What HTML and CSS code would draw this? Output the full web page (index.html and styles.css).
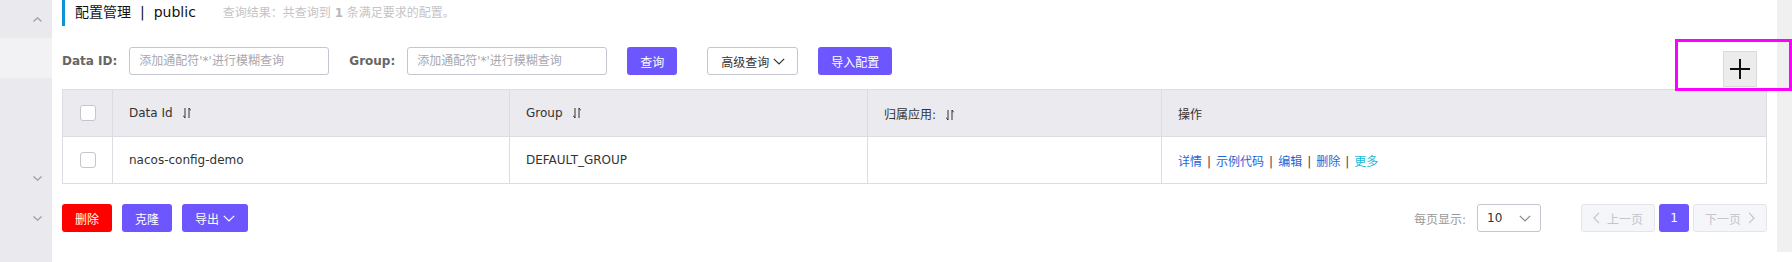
FILE: index.html
```html
<!DOCTYPE html>
<html lang="zh-CN">
<head>
  <meta charset="UTF-8" />
  <meta name="viewport" content="width=device-width, initial-scale=1.0"/>
  <title>配置管理 - Nacos</title>
  <link rel="stylesheet" href="styles.css">
</head>
<body>
  <div class="page">
    <aside class="sidebar">
      <div class="menu-item first">
        <svg class="arrow" width="9" height="5" viewBox="0 0 9 5"><path d="M0.5 4.5 L4.5 0.8 L8.5 4.5" /></svg>
      </div>
      <div class="menu-item active"></div>
      <div class="menu-item"></div>
      <div class="menu-item"></div>
      <div class="menu-item">
        <svg class="arrow" width="9" height="5" viewBox="0 0 9 5"><path d="M0.5 0.5 L4.5 4.2 L8.5 0.5" /></svg>
      </div>
      <div class="menu-item">
        <svg class="arrow" width="9" height="5" viewBox="0 0 9 5"><path d="M0.5 0.5 L4.5 4.2 L8.5 0.5" /></svg>
      </div>
    </aside>

    <main class="content">
      <div class="page-title">
        <span class="title-main">配置管理<span class="sep">|</span>public</span>
        <span class="query-result">查询结果：共查询到 <b>1</b> 条满足要求的配置。</span>
      </div>

      <div class="search-bar">
        <label class="field-label">Data ID:</label>
        <input class="field-input" type="text" placeholder="添加通配符'*'进行模糊查询">
        <label class="field-label">Group:</label>
        <input class="field-input" type="text" placeholder="添加通配符'*'进行模糊查询">
        <button class="btn btn-primary">查询</button>
        <button class="btn btn-normal btn-wide">高级查询
          <svg class="down" width="12" height="7" viewBox="0 0 12 7"><path d="M0.8 0.8 L6 6 L11.2 0.8" /></svg>
        </button>
        <button class="btn btn-primary">导入配置</button>
        <button class="btn-add" title="新建配置">
          <svg width="22" height="22" viewBox="0 0 22 22"><path d="M1 11 H21 M11 1 V21" /></svg>
        </button>
      </div>

      <table class="config-table">
        <thead>
          <tr>
            <th class="col-check"><span class="checkbox"></span></th>
            <th class="col-id">Data Id<svg class="sort" width="8" height="12" viewBox="0 0 8 12"><path d="M2 1 V11 L0.2 8.6 M6 11 V1 L7.8 3.4" /></svg></th>
            <th class="col-group">Group<svg class="sort" width="8" height="12" viewBox="0 0 8 12"><path d="M2 1 V11 L0.2 8.6 M6 11 V1 L7.8 3.4" /></svg></th>
            <th class="col-app">归属应用:<svg class="sort" width="8" height="12" viewBox="0 0 8 12"><path d="M2 1 V11 L0.2 8.6 M6 11 V1 L7.8 3.4" /></svg></th>
            <th>操作</th>
          </tr>
        </thead>
        <tbody>
          <tr>
            <td class="col-check"><span class="checkbox"></span></td>
            <td>nacos-config-demo</td>
            <td>DEFAULT_GROUP</td>
            <td></td>
            <td class="actions">
              <a href="#">详情</a><span class="bar">|</span><a href="#">示例代码</a><span class="bar">|</span><a href="#">编辑</a><span class="bar">|</span><a href="#">删除</a><span class="bar">|</span><a href="#" class="more">更多</a>
            </td>
          </tr>
        </tbody>
      </table>

      <div class="footer-bar">
        <div class="batch">
          <button class="btn btn-danger">删除</button>
          <button class="btn btn-primary">克隆</button>
          <button class="btn btn-primary">导出
            <svg class="down" width="12" height="7" viewBox="0 0 12 7"><path d="M0.8 0.8 L6 6 L11.2 0.8" /></svg>
          </button>
        </div>
        <div class="pagination">
          <span class="page-size-label">每页显示:</span>
          <div class="page-size">
            <span>10</span>
            <svg class="down" width="12" height="7" viewBox="0 0 12 7"><path d="M0.8 0.8 L6 6 L11.2 0.8" /></svg>
          </div>
          <button class="page-btn page-nav prev">
            <svg width="7" height="12" viewBox="0 0 7 12"><path d="M6 0.8 L1 6 L6 11.2" /></svg>上一页
          </button>
          <button class="page-btn current">1</button>
          <button class="page-btn page-nav next">下一页
            <svg width="7" height="12" viewBox="0 0 7 12"><path d="M1 0.8 L6 6 L1 11.2" /></svg>
          </button>
        </div>
      </div>
    </main>

    <div class="scrollbar"></div>
    <div class="highlight"></div>
  </div>
</body>
</html>
```

FILE: styles.css
```css
* {
  margin: 0;
  padding: 0;
  box-sizing: border-box;
}
body {
  font-family: 'DejaVu Sans', 'Noto Sans CJK SC', sans-serif;
  font-size: 12px;
  color: #333;
  background: #fff;
}
.page {
  position: relative;
  display: flex;
  height: 262px;
  overflow: hidden;
}

/* sidebar */
.sidebar {
  width: 52px;
  flex-shrink: 0;
  background: #e9e9ee;
}
.menu-item {
  height: 40px;
  display: flex;
  align-items: center;
  justify-content: flex-end;
  padding-right: 10px;
}
.menu-item.first {
  height: 38px;
}
.menu-item.active {
  background: #f2f2f5;
}
.arrow path {
  fill: none;
  stroke: #9a9aa3;
  stroke-width: 1.1;
}

/* content */
.content {
  flex: 1;
  padding: 0 10px;
}
.page-title {
  display: flex;
  align-items: center;
  height: 26px;
  padding-bottom: 4px;
  border-left: 3px solid #0e93d6;
  padding-left: 10px;
}
.title-main {
  font-size: 14px;
  color: #111;
}
.sep {
  margin: 0 9px;
}
.query-result {
  margin-left: 27px;
  color: #c4c4c8;
  font-size: 12px;
}
.query-result b {
  color: #b8b8bc;
}

.search-bar {
  display: flex;
  align-items: flex-start;
  height: 28px;
  margin-top: 21px;
}
.field-label {
  font-weight: bold;
  color: #666;
  line-height: 28px;
  margin-right: 12px;
}
.field-input {
  width: 200px;
  height: 28px;
  border: 1px solid #c4c6cf;
  border-radius: 3px;
  padding: 0 9px;
  font-family: inherit;
  font-size: 12px;
  margin-right: 20px;
  outline: none;
}
.field-input::placeholder {
  color: #a8a8b0;
}

.btn {
  height: 28px;
  padding: 0 12px;
  border-radius: 3px;
  font-family: inherit;
  font-size: 12px;
  display: inline-flex;
  align-items: center;
  border: 1px solid transparent;
  cursor: pointer;
}
.btn .down {
  margin-left: 4px;
}
.btn .down path,
.page-size .down path {
  fill: none;
  stroke: currentColor;
  stroke-width: 1.2;
}
.btn-primary {
  background: #6e56ff;
  color: #fff;
  margin-right: 30px;
}
.search-bar .btn-primary:last-of-type {
  margin-right: 20px;
}
.btn-normal {
  background: #fff;
  border-color: #c4c6cf;
  color: #333;
  margin-right: 20px;
}
.btn-wide {
  padding: 0 12px 0 13px;
}
.btn-danger {
  background: #ff0000;
  color: #fff;
}
.btn-add {
  margin-left: auto;
  margin-right: 10px;
  margin-top: 4px;
  width: 34px;
  height: 36px;
  background: #ececec;
  border: 1px solid #dadada;
  display: flex;
  align-items: center;
  justify-content: center;
}
.btn-add path {
  stroke: #111;
  stroke-width: 2;
  fill: none;
}

/* table */
.config-table {
  width: 100%;
  margin-top: 14px;
  border-collapse: collapse;
  border: 1px solid #dcdce3;
  table-layout: fixed;
}
.config-table th,
.config-table td {
  text-align: left;
  padding: 0 16px;
  height: 47px;
  border-bottom: 1px solid #dcdce3;
  border-right: 1px solid #dcdce3;
  font-weight: normal;
  font-size: 12px;
  color: #333;
}
.config-table th {
  background: #eaeaef;
}
.config-table .col-check {
  width: 50px;
  padding: 0;
  text-align: center;
}
.col-id {
  width: 397px;
}
.col-group {
  width: 358px;
}
.col-app {
  width: 294px;
}
.checkbox {
  display: inline-block;
  width: 16px;
  height: 16px;
  border: 1px solid #c4c6cf;
  border-radius: 3px;
  background: #fff;
  vertical-align: middle;
}
.sort {
  margin-left: 10px;
  vertical-align: -2px;
}
.sort path {
  fill: none;
  stroke: #333;
  stroke-width: 1;
}
.actions a {
  color: #2a63d6;
  text-decoration: none;
}
.actions a.more {
  color: #19b8d8;
}
.actions .bar {
  color: #444;
  margin: 0 5px;
}

/* footer */
.footer-bar {
  display: flex;
  justify-content: space-between;
  margin-top: 20px;
}
.batch {
  display: flex;
  gap: 10px;
}
.batch .btn {
  margin-right: 0;
}
.pagination {
  display: flex;
  align-items: center;
}
.page-size-label {
  color: #999;
  margin-right: 11px;
}
.page-size {
  width: 64px;
  height: 28px;
  border: 1px solid #c4c6cf;
  border-radius: 3px;
  display: flex;
  align-items: center;
  justify-content: space-between;
  padding: 0 9px 0 9px;
  font-size: 12px;
  color: #333;
  margin-right: 40px;
}
.page-size .down {
  color: #888;
}
.page-btn {
  height: 28px;
  border-radius: 3px;
  font-family: inherit;
  font-size: 12px;
  border: 1px solid transparent;
  display: inline-flex;
  align-items: center;
  justify-content: center;
}
.page-nav {
  width: 74px;
  background: #f5f6f9;
  border-color: #e4e4ea;
  color: #c4c4cc;
  gap: 7px;
}
.page-nav path {
  fill: none;
  stroke: #c4c4cc;
  stroke-width: 1.2;
}
.page-btn.current {
  width: 30px;
  margin: 0 4px;
  background: #6e56ff;
  color: #fff;
}

.scrollbar {
  width: 15px;
  height: 252px;
  flex-shrink: 0;
  background: #f0f0f0;
}
.highlight {
  position: absolute;
  left: 1675px;
  top: 39px;
  width: 117px;
  height: 52px;
  border: 3px solid #ff00ff;
}
```
